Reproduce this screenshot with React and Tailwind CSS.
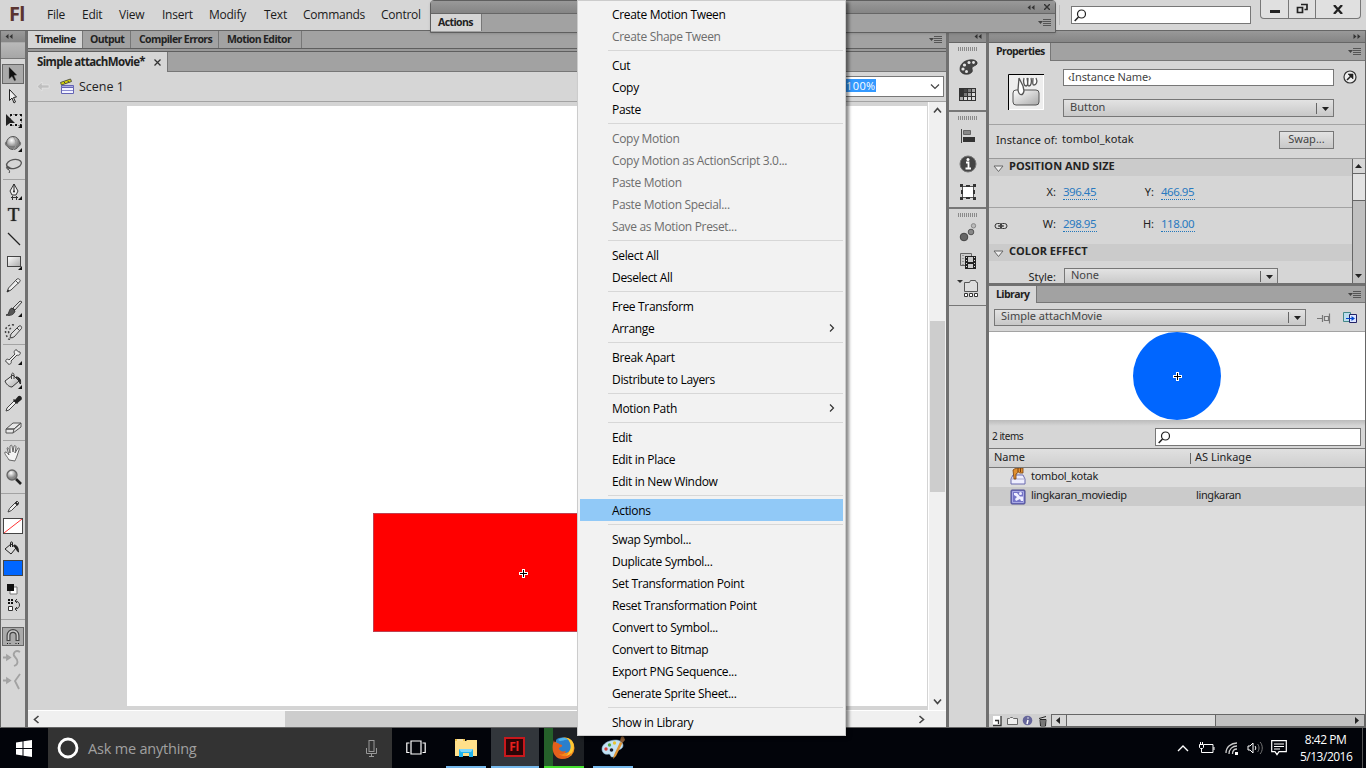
import clsx from 'clsx';

const menus = [
  { label: 'File', width: 'w-[35px]' },
  { label: 'Edit', width: 'w-[37px]' },
  { label: 'View', width: 'w-[43px]' },
  { label: 'Insert', width: 'w-[47px]' },
  { label: 'Modify', width: 'w-[55px]' },
  { label: 'Text', width: 'w-[39px]' },
  { label: 'Commands', width: 'w-[78px]' },
  { label: 'Control', width: 'w-[50px]' },
];

const contextGroups = [
  [{ label: 'Create Motion Tween' }, { label: 'Create Shape Tween', disabled: true }],
  [{ label: 'Cut' }, { label: 'Copy' }, { label: 'Paste' }],
  [
    { label: 'Copy Motion', disabled: true },
    { label: 'Copy Motion as ActionScript 3.0...', disabled: true },
    { label: 'Paste Motion', disabled: true },
    { label: 'Paste Motion Special...', disabled: true },
    { label: 'Save as Motion Preset...', disabled: true },
  ],
  [{ label: 'Select All' }, { label: 'Deselect All' }],
  [{ label: 'Free Transform' }, { label: 'Arrange', submenu: true }],
  [{ label: 'Break Apart' }, { label: 'Distribute to Layers' }],
  [{ label: 'Motion Path', submenu: true }],
  [{ label: 'Edit' }, { label: 'Edit in Place' }, { label: 'Edit in New Window' }],
  [{ label: 'Actions', active: true }],
  [
    { label: 'Swap Symbol...' },
    { label: 'Duplicate Symbol...' },
    { label: 'Set Transformation Point' },
    { label: 'Reset Transformation Point' },
    { label: 'Convert to Symbol...' },
    { label: 'Convert to Bitmap' },
    { label: 'Export PNG Sequence...' },
    { label: 'Generate Sprite Sheet...' },
  ],
  [{ label: 'Show in Library' }],
];

function Svg({ w = 22, h = 22, className, children }) {
  return (
    <svg
      className={clsx('block shrink-0', className)}
      fill="none"
      height={h}
      viewBox={`0 0 ${w} ${h}`}
      width={w}
    >
      {children}
    </svg>
  );
}

const Corner = () => <path d="M21 15v4h-4z" fill="#111" />;

const tools = {
  select: (
    <Svg>
      <path d="M8 4v12l3-2.500 2.500 4.500 1.500-1-2-4.500 3-.5z" fill="#111" stroke="#777" strokeWidth=".5" />
    </Svg>
  ),
  subselect: (
    <Svg>
      <path d="M8.500 4.500v11l2.500-2.500 2 5 1.500-1-2-4.500 3-.5z" fill="#eee" stroke="#222" />
    </Svg>
  ),
  transform: (
    <Svg>
      <path d="M9.500 5.500h11v11h-11z" stroke="#333" strokeDasharray="1 2" />
      <path d="M9 5h2v2H9zM14 5h2v2h-2zM19 5h2v2h-2zM19 10h2v2h-2zM14 15h2v2h-2zM9 15h2v2H9zM19 15h1v2h-1z" fill="#111" />
      <path d="M5 5v12l4-3h5z" fill="#222" />
      <Corner />
    </Svg>
  ),
  rotate3d: (
    <Svg>
      <circle cx="12" cy="10" fill="url(#ball)" r="6.500" stroke="#555" />
      <path d="M5 9c-2 3 2 5 7 5 5 0 9-2 7-5" stroke="#777" strokeWidth="1.300" />
      <path d="M12 4c4 3 4 10 0 13" stroke="#999" />
      <Corner />
    </Svg>
  ),
  lasso: (
    <Svg>
      <ellipse cx="13" cy="8" rx="7.500" ry="4.500" stroke="#555" strokeWidth="1.300" transform="rotate(-12 13 8)" />
      <path d="M7 10c-3 1-1 4 1 3s0-3-1-2c-1 3 3 3 1 6" stroke="#444" />
    </Svg>
  ),
  pen: (
    <Svg>
      <path d="M13 3l4 7-2 4h-4l-2-4z" fill="#eee" stroke="#333" />
      <path d="M13 3v7" stroke="#222" />
      <circle cx="13" cy="10.500" fill="#222" r="1" />
      <path d="M11.500 15v4M15.500 15v4M10 16.500h7" stroke="#333" />
      <Corner />
    </Svg>
  ),
  line: (
    <Svg>
      <path d="M7 5l12 12" stroke="#222" strokeWidth="1.200" />
    </Svg>
  ),
  rect: (
    <Svg>
      <rect fill="url(#sheen)" height="10" stroke="#444" width="13" x="6.500" y="5.500" />
      <Corner />
    </Svg>
  ),
  pencil: (
    <Svg>
      <path d="M6 18l1.500-4 8.500-9c1.500-1 4 1 3 2.500l-9 8.500z" fill="#eee" stroke="#444" />
      <path d="M6 18l1-2.500 1.500 1.500z" fill="#222" />
      <path d="M14.500 6.500l3 3" stroke="#555" />
    </Svg>
  ),
  brush: (
    <Svg>
      <path d="M12 10l7-7 2 1-7 8z" fill="#ddd" stroke="#444" />
      <path d="M5 17c4 0 2-6 6-7l3 3c-1 4-5 5-9 4z" fill="#555" stroke="#333" />
      <Corner />
    </Svg>
  ),
  deco: (
    <Svg>
      <path d="M9 17l1-4 8-8c2-1 3 1 2.500 2.500L13 16z" fill="#ddd" stroke="#444" />
      <path d="M16 7l2.500 2.500" stroke="#444" />
      <path d="M13 4C7 3 3 7 5 13s3 6 6 4M10 7c-3 2-3 5-1 7" stroke="#444" strokeDasharray="2 2" strokeWidth="1.500" />
    </Svg>
  ),
  bone: (
    <Svg>
      <path d="M5 16c-1-2 1-4 3-2l6-6c-2-2 0-5 2-4 0 1 1 2 3 2 1 2-1 4-3 3l-6 6c1 2-1 4-3 3 0-1-1-2-2-2z" fill="#eee" stroke="#444" />
      <Corner />
    </Svg>
  ),
  bucket: (
    <Svg>
      <path d="M4 11l8-6 6 6-7 6c-3 0-6-3-7-6z" fill="url(#sheen)" stroke="#333" />
      <path d="M10.500 9V5c0-2.500 2.500-2.500 2.500 0v4" stroke="#444" />
      <path d="M15 7c4 0 5 3 4.500 7-1.500-1-1-5-4.500-7z" fill="#222" stroke="#222" />
      <Corner />
    </Svg>
  ),
  dropper: (
    <Svg>
      <path d="M5 18l1-3 7-7 2 2-7 7z" fill="#eee" stroke="#444" />
      <path d="M12.500 6.500l4 4M14.500 7.500l3-3.500c1.500-1 3 .5 2.500 2l-3.500 3z" fill="#222" stroke="#222" strokeWidth="1.600" />
    </Svg>
  ),
  eraser: (
    <Svg>
      <path d="M5 12l7-6h8l-7 6zM5 12v4h7l8-6V6l-7 6z" fill="#e8e8e8" stroke="#555" />
      <path d="M13 12l-1 4" stroke="#555" />
    </Svg>
  ),
  hand: (
    <Svg>
      <path
        d="M8 18c-2-4-5-6-4-8 2 0 2 1 4 3L6 6c1-1 2 0 3 5V4c1-1 2-1 2 0l1 6 1-6c1-1 2 0 2 1l-1 6 3-5c1 0 2 0 1 2l-2 6c-1 3-2 4-2 5z"
        fill="#f4f4f4"
        stroke="#666"
      />
    </Svg>
  ),
  zoom: (
    <Svg>
      <circle cx="11" cy="8" fill="url(#ball)" r="5" stroke="#666" strokeWidth="1.300" />
      <path d="M15 12l5 5" stroke="#222" strokeWidth="2.600" />
    </Svg>
  ),
};

function ToolGroup({ names, className }) {
  return (
    <div className={clsx('flex flex-col items-center justify-around', className)}>
      {names.map((name) => (
        <div
          key={name}
          className={clsx(
            'flex w-[22px] items-center justify-center pr-[2px]',
            name === 'select' ? 'h-[20px] border border-[#666] bg-[#aaa]' : 'h-[22px]',
          )}
        >
          {name === 'text' ? (
            <span className="pl-[3px] font-['Liberation_Serif',serif] text-[19px] leading-[20px] text-[#222] [text-shadow:0_0_1px_#222]">
              T
            </span>
          ) : (
            tools[name]
          )}
        </div>
      ))}
    </div>
  );
}

const Rule = () => <div className="ml-0.5 h-px w-[22px] shrink-0 bg-[#a3a3a3]" />;

function Toolbar() {
  return (
    <div className="flex h-full w-[28px] shrink-0 flex-col border-l border-[#666] border-r-[3px] border-r-[#707070] bg-[#d6d6d6]">
      <div className="flex h-[11px] items-center bg-gradient-to-b from-[#9a9a9a] to-[#868686] pl-1">
        <Chevrons />
      </div>
      <div className="h-[17px] border-y border-[#777] border-t-[#aaa] bg-gradient-to-b from-[#b9b9b9] to-[#a6a6a6]" />
      <ToolGroup className="mt-[4px] h-[116px]" names={['select', 'subselect', 'transform', 'rotate3d', 'lasso']} />
      <Rule />
      <ToolGroup className="h-[164px]" names={['pen', 'text', 'line', 'rect', 'pencil', 'brush', 'deco']} />
      <Rule />
      <ToolGroup className="h-[95px]" names={['bone', 'bucket', 'dropper', 'eraser']} />
      <Rule />
      <ToolGroup className="h-[52px] pb-[3px]" names={['hand', 'zoom']} />
      <div className="h-px shrink-0 bg-[#a3a3a3]" />
      <div className="flex flex-col items-center">
        <Svg className="mt-[3px]" h={19}>
          <path d="M6 15l1.500-3.500L15 4l2 2-7.500 7.500z" fill="#eee" stroke="#444" />
          <path d="M13.500 5.500l2.500 2.500" stroke="#222" strokeWidth="2" />
        </Svg>
        <Svg className="mr-px mt-0.5" h={16} w={20}>
          <rect fill="#fff" height="15" stroke="#444" width="19" x=".5" y=".5" />
          <path d="M1 15L19 1" stroke="#f33" />
        </Svg>
        <Svg className="mr-[2px] mt-[5px]" h={18}>
          <path d="M4 10l6-5 5 4-5 6z" fill="#ddd" stroke="#222" />
          <path d="M9.500 8V4c0-1.500 2-1.500 2 0v4" stroke="#222" />
          <path d="M13 6c3 0 4.500 3 4.500 7-2-1-2-4-4.500-6z" fill="#222" stroke="#222" />
        </Svg>
        <div className="mr-px mt-[3px] h-[16px] w-[20px] border border-[#444] bg-[#06f]" />
        <Svg className="mr-[2px] mt-[5px]" h={16}>
          <path d="M9 6h7v7H9z" fill="#fff" stroke="#777" />
          <path d="M6 3h7v7H6z" fill="#111" />
        </Svg>
        <Svg className="mr-px" h={16}>
          <path d="M6 2h2v2H6zM9 2h2v2H9zM6 5h2v2H6zM9 5h2v2H9z" fill="#111" />
          <path d="M6.500 9.500h4v4h-4z" fill="#fff" stroke="#333" />
          <path d="M13 4c6 0 6 8 0 8M15 2l-2 2 2 2M15 10l-2 2 2 2" stroke="#333" />
        </Svg>
      </div>
      <div className="mt-[6px] h-px shrink-0 bg-[#a3a3a3]" />
      <div className="ml-px mt-[7px] flex h-[19px] w-[22px] shrink-0 items-center justify-center border border-[#666] bg-[#aaa]">
        <Svg h={17} w={20}>
          <path d="M5.500 13V7.500c0-6 9-6 9 0V13" stroke="#444" strokeWidth="4" />
          <path d="M5.500 12V7.500c0-6 9-6 9 0V12" stroke="#ccc" strokeWidth="1.600" />
          <path d="M4 15.500h1M6.500 15.500h1M12.500 15.500h1M15 15.500h1" stroke="#111" />
        </Svg>
      </div>
      <Svg className="ml-0.5 mt-0.5" h={22}>
        <path d="M0 9.500h5M4 7.500l3 2-3 2zM17 4c-5-3-8 2-5 5s4 7-1 9" fill="none" stroke="#a2a2a2" strokeWidth="1.800" />
      </Svg>
      <Svg className="ml-0.5 mt-px" h={22}>
        <path d="M0 9.500h5M4 7.500l3 2-3 2zM17 3l-5 7 4 8" fill="none" stroke="#a2a2a2" strokeWidth="1.800" />
      </Svg>
    </div>
  );
}

function Chevrons({ flip }) {
  return (
    <Svg className={clsx(flip && 'rotate-180')} h={5} w={8}>
      <path d="M3.500 0v5L.5 2.500zM7.500 0v5l-3-2.500z" fill="#333" />
    </Svg>
  );
}

function PanelMenu({ className }) {
  return (
    <Svg className={className} h={8} w={13}>
      <path d="M0 2h5L2.500 5z" fill="#444" />
      <path d="M5 .5h8M5 2.500h8M5 4.500h8M5 6.500h8" stroke="#555" />
    </Svg>
  );
}

function Arrow({ dir = 'down', className }) {
  const paths = {
    down: 'M0 1h7L3.500 5z',
    up: 'M0 5h7L3.500 1z',
    left: 'M5 0v7L1 3.500z',
    right: 'M1 0v7l4-3.500z',
  };
  return (
    <Svg className={className} h={7} w={7}>
      <path d={paths[dir]} fill="#222" />
    </Svg>
  );
}

function Search({ className }) {
  return (
    <div className={clsx('flex items-center border border-[#777] bg-white pl-[2px]', className)}>
      <Svg h={13} w={12}>
        <circle cx="7.500" cy="5" r="4" stroke="#222" strokeWidth="1.200" />
        <path d="M4.500 8L.7 12" stroke="#222" strokeWidth="1.500" />
      </Svg>
    </div>
  );
}

function Dropdown({ label, className }) {
  return (
    <div
      className={clsx(
        'flex items-center border border-[#777] bg-gradient-to-b from-[#e3e3e3] to-[#c8c8c8] pl-1.5 text-[#444]',
        className,
      )}
    >
      <span className="flex-1 pb-[2px] tracking-normal">{label}</span>
      <span className="h-[11px] w-px bg-[#666]" />
      <Arrow className="ml-[5px] mr-1 mt-0.5" />
    </div>
  );
}

function Tab({ className, children }) {
  return (
    <div
      className={clsx(
        "flex shrink-0 items-center whitespace-nowrap border-r border-[#777] font-['Open_Sans',sans-serif] text-[10.500px] font-bold tracking-[-0.6px] text-[#222]",
        className,
      )}
    >
      {children}
    </div>
  );
}

function MenuBar() {
  return (
    <header className="flex h-[30px] shrink-0 bg-[#d6d6d6]">
      <div className="w-[47px] pl-[9px] font-['Open_Sans',sans-serif] text-[20px] font-bold leading-[27px] tracking-[-0.8px] text-[#5a3430]">
        Fl
      </div>
      <nav className="flex text-[12px] leading-[30px] tracking-[-0.25px] text-[#1a1a1a]">
        {menus.map((menu) => (
          <span key={menu.label} className={clsx('shrink-0', menu.width)}>
            {menu.label}
          </span>
        ))}
      </nav>
      <div className="ml-auto mt-[5px] h-[20px] w-px bg-[#bbb]" />
      <Search className="ml-[11px] mt-[6px] h-[18px] w-[180px]" />
      <div className="ml-[9px] mr-[5px] flex h-[19px] w-[101px] rounded-b-sm border border-t-0 border-[#777] bg-[#e0e0e0]">
        <div className="flex w-[28px] items-end justify-center border-r border-[#777] pb-[5px]">
          <span className="h-[3px] w-[10px] bg-[#222]" />
        </div>
        <div className="flex w-[27px] items-center justify-center border-r border-[#777]">
          <Svg h={12} w={12}>
            <path d="M5 1.500h6v5H8.500M1.500 4.500h5v5h-5z" stroke="#222" strokeWidth="1.700" />
          </Svg>
        </div>
        <div className="flex flex-1 items-center justify-center">
          <Svg h={9} w={10}>
            <path d="M1 0l8 9M9 0L1 9" stroke="#222" strokeWidth="2.300" />
          </Svg>
        </div>
      </div>
    </header>
  );
}

function Cross() {
  return (
    <Svg h={9} w={9}>
      <path d="M3 0h3v3h3v3H6v3H3V6H0V3h3z" fill="#fff" />
      <path d="M4.500 1v7M1 4.500h7" stroke="#000" />
    </Svg>
  );
}

function ScrollMark({ d }) {
  return (
    <Svg h={9} w={9}>
      <path d={d} stroke="#444" strokeWidth="1.600" />
    </Svg>
  );
}

function Document() {
  return (
    <main className="flex w-[918px] shrink-0 flex-col">
      <div className="flex h-[17px] bg-[#a2a2a2]">
        <Tab className="w-[55px] bg-[#d6d6d6] pl-[7px] pt-px">Timeline</Tab>
        <Tab className="w-[48px] pl-[7px] pt-px">Output</Tab>
        <Tab className="w-[88px] pl-[8px] pt-px">Compiler Errors</Tab>
        <Tab className="w-[83px] pl-[8px] pt-px">Motion Editor</Tab>
        <PanelMenu className="ml-auto mr-[4px] mt-[5px]" />
      </div>
      <div className="h-[4px] border-y border-[#5f5f5f] bg-[#999]" />
      <div className="flex h-[20px] border-b border-[#777] bg-[#a2a2a2]">
        <div className="-mb-px flex w-[140px] items-center whitespace-nowrap border-r border-[#777] bg-[#d6d6d6] pl-[9px] font-['Open_Sans',sans-serif] text-[11.500px] font-bold tracking-[-0.64px] text-[#222]">
          <span className="w-[117px]">Simple attachMovie*</span>
          <Svg h={7} w={7}>
            <path d="M.5 .5l6 6M6.500.5l-6 6" stroke="#333" strokeWidth="1.300" />
          </Svg>
        </div>
      </div>
      <div className="flex h-[30px] items-center border-b border-[#a3a3a3] bg-[#d6d6d6] pl-2 text-[12.500px]">
        <Svg h={11} w={14}>
          <path d="M6 1L1 5.500 6 10V7h7V4H6z" fill="#bfbfbf" stroke="#eee" strokeWidth=".5" />
        </Svg>
        <Svg className="ml-[9px] mr-1" h={17} w={16}>
          <path d="M2.500 9.500h12v6h-12z" fill="#f2f2ff" stroke="#6464b4" />
          <path d="M2.500 7.500h12v2h-12z" fill="#aaaae0" stroke="#6464b4" />
          <path d="M3 12.500h11" stroke="#8c8cd0" />
          <path d="M1.500 4.500l10-3.500 1 2.500-10 3.500z" fill="#d8d800" stroke="#554" />
          <path d="M5 4l1.500 1.500M8.500 2.800l1.500 1.500" stroke="#443" />
        </Svg>
        <span className="pt-[2px] text-[#222]">Scene 1</span>
        <div className="ml-auto mr-[2px] flex h-[21px] w-[108px] items-center border border-[#777] bg-white pl-[9px]">
          <span className="mb-[2px] bg-[#39f] text-[11px] leading-[13px] tracking-[0.4px] text-white">100%</span>
          <Svg className="ml-auto mr-[3px]" h={6} w={10}>
            <path d="M1 .5l4 4 4-4" stroke="#444" strokeWidth="1.200" />
          </Svg>
        </div>
      </div>
      <div className="flex h-[608px]">
        <div className="flex-1 overflow-hidden bg-[#d4d4d4] pl-[99px] pt-[4px]">
          <div className="mr-px h-[600px] bg-white pl-[246px] pt-[407px]">
            <div className="flex h-[119px] w-[299px] items-center justify-center border border-[#c04050] bg-[#f00] pl-[2px] pt-[2px]">
              <Cross />
            </div>
          </div>
        </div>
        <div className="flex w-[18px] flex-col items-center border-l border-white bg-[#f0f0f0]">
          <div className="flex h-[17px] items-center">
            <ScrollMark d="M1 6.500l3.500-4 3.500 4" />
          </div>
          <div className="mt-[202px] h-[171px] w-[15px] bg-[#cdcdcd]" />
          <div className="mb-0 mt-auto flex h-[17px] items-center">
            <ScrollMark d="M1 2.500l3.500 4 3.500-4" />
          </div>
        </div>
      </div>
      <div className="flex h-[17px] items-center border-t border-white bg-[#f0f0f0] pl-[4px] pr-[20px]">
        <ScrollMark d="M6.500 1l-4 3.500 4 3.500" />
        <div className="ml-[244px] h-full w-[400px] bg-[#cdcdcd]" />
        <div className="ml-auto">
          <ScrollMark d="M2.500 1l4 3.500-4 3.500" />
        </div>
      </div>
    </main>
  );
}

const Grip = () => (
  <div className="mx-auto h-[4px] w-[19px] bg-[repeating-linear-gradient(90deg,#8a8a8a_0_1px,transparent_1px_2px)]" />
);

function Dock() {
  return (
    <aside className="flex w-[43px] shrink-0 flex-col border-x-[3px] border-[#707070] bg-[#d6d6d6]">
      <div className="flex h-[12px] items-center justify-end border-b border-[#666] bg-[#8c8c8c] pr-1">
        <Chevrons />
      </div>
      <div className="flex h-[69px] flex-col items-center border-b-2 border-[#777] pt-[4px]">
        <Grip />
        <Svg className="mt-[7px]" h={18} w={20}>
          <path d="M11 2c5-1 9 1 8 4-1 2-5 2-5 4s2 4-3 6c-5 1-9-1-9-5s3-8 9-9z" fill="#444" stroke="#222" strokeWidth=".6" />
          <circle cx="6.500" cy="7" fill="#e4e4e4" r="1.600" />
          <circle cx="11" cy="4.500" fill="#e4e4e4" r="1.500" />
          <circle cx="15.500" cy="4.500" fill="#e4e4e4" r="1.400" />
          <circle cx="5" cy="11" fill="#e4e4e4" r="1.600" />
          <circle cx="8.500" cy="13.500" fill="#e4e4e4" r="1.500" />
        </Svg>
        <Svg className="mt-[11px]" h={16} w={19}>
          <path d="M1 1h17v13H1z" fill="#333" />
          <path d="M2 2h3v3H2z" fill="#333" />
          <path d="M6 2h3v3H6z" fill="#444" />
          <path d="M10 2h3v3h-3zM6 6h3v3H6z" fill="#777" />
          <path d="M14 2h3v3h-3zM10 6h3v3h-3zM2 10h3v3H2z" fill="#aaa" />
          <path d="M14 6h3v3h-3zM6 10h3v3H6zM10 10h3v3h-3zM14 10h3v3h-3z" fill="#ddd" />
        </Svg>
      </div>
      <div className="flex h-[97px] flex-col items-center border-b-2 border-[#777] pt-[4px]">
        <Grip />
        <Svg className="mt-[9px]" h={15} w={18}>
          <path d="M2.500 0v14" stroke="#444" />
          <path d="M4.500 1.500h7v4h-7z" fill="#888" stroke="#666" />
          <path d="M4 8h12v5H4z" fill="#333" />
        </Svg>
        <Svg className="mt-[11px]" h={18} w={18}>
          <circle cx="9" cy="9" fill="#444" r="8" stroke="#777" />
          <circle cx="9" cy="4.500" fill="#fff" r="1.500" />
          <path d="M7 7.500h2.500V13M6.500 13.500h5.500" stroke="#fff" strokeWidth="1.800" />
        </Svg>
        <Svg className="mt-[10px]" h={18} w={18}>
          <path d="M3.500 3.500h11v11h-11z" fill="#fff" stroke="#555" />
          <path d="M1 1h3v3H1zM7 2h4v2H7zM14 1h3v3h-3zM2 7h2v4H2zM14 7h2v4h-2zM1 14h3v3H1zM7 14h4v2H7zM14 14h3v3h-3z" fill="#333" />
        </Svg>
      </div>
      <div className="flex h-[97px] flex-col items-center border-b border-[#777] pt-[4px]">
        <Grip />
        <Svg className="mt-[6px]" h={19} w={18}>
          <circle cx="5" cy="14" fill="#666" r="3.800" stroke="#444" />
          <circle cx="12" cy="9" fill="#888" r="2.800" stroke="#555" />
          <circle cx="14.500" cy="2.800" fill="#bbb" r="2.200" stroke="#888" />
        </Svg>
        <Svg className="mt-[10px]" h={18} w={18}>
          <path d="M1.500 1.500h11v12h-11z" fill="#ccc" stroke="#666" />
          <path d="M4 3v10" stroke="#666" strokeDasharray="1 2" />
          <path d="M6 4h11v13H6z" fill="#222" />
          <path d="M9 5h5v5H9zM9 12h5v4H9z" fill="#ccc" />
          <path d="M7.500 5v12M15.500 5v12" stroke="#ddd" strokeDasharray="1 2" />
        </Svg>
        <Svg className="mt-[9px]" h={19} w={22}>
          <path d="M0 1h6L3 4z" fill="#333" />
          <path d="M7.500 3.500h5l1-2h5l1 2h1v9h-13z" fill="#ddd" stroke="#555" />
          <path d="M7.500 14.500h3v3h-3zM12.500 14.500h3v3h-3zM17.500 14.500h3v3h-3z" fill="#fff" stroke="#333" />
        </Svg>
      </div>
    </aside>
  );
}

function Section({ children }) {
  return (
    <div className="flex h-[17px] items-center bg-[#cbcbcb] pb-[2px] pl-1 font-['Open_Sans',sans-serif] text-[11px] font-bold text-[#222]">
      <Svg className="mr-[5px] mt-[4px]" h={8} w={11}>
        <path d="M1 1h9L5.500 6.500z" fill="#eee" stroke="#666" />
      </Svg>
      {children}
    </div>
  );
}

function Value({ label, value, labelClass }) {
  return (
    <>
      <span className={clsx('text-right text-[#222]', labelClass)}>{label}</span>
      <span className="ml-[7px] w-[34px] whitespace-nowrap border-b border-dotted border-[#2277bb] text-[11.500px] leading-[14px] tracking-[-0.5px] text-[#2a7ac0]">
        {value}
      </span>
    </>
  );
}

function Properties() {
  return (
    <section>
      <div className="flex h-[18px] border-b border-[#777] bg-[#a2a2a2]">
        <Tab className="-mb-px w-[62px] bg-[#d6d6d6] pb-px pl-[7px]">Properties</Tab>
        <PanelMenu className="ml-auto mr-[4px] mt-[5px]" />
      </div>
      <div className="flex h-[64px] border-b border-[#a3a3a3]">
        <Svg className="ml-[19px] mt-[13px]" h={36} w={36}>
          <path d="M0 0h36v36H0z" fill="#eee" />
          <path d="M35.500 0v35.500H0" stroke="#fff" />
          <path d="M.5 36V.5H36" stroke="#000" />
          <rect fill="url(#sheen)" height="15" rx="3" stroke="#555" width="26" x="5" y="16" />
          <path
            d="M11 4l-1 12c1 6 5 6 6 1l-1-5M11 4l4 8M16 4c-1 4 0 8 2 8s2-4 1-8M20 4c0 3-1 8 1 8s3-4 2-8M25 4c0 3-1 7 1 7s4-3 2-7"
            fill="#fff"
            stroke="#555"
            strokeWidth="1.300"
          />
        </Svg>
        <div className="ml-[19px] mt-[8px] w-[271px]">
          <div className="flex h-[17px] items-center border border-[#777] bg-white pl-[4px] tracking-[-0.1px] text-[#444]">
            &lsaquo;Instance Name&rsaquo;
          </div>
          <Dropdown className="mt-[13px] h-[18px]" label="Button" />
        </div>
        <Svg className="ml-[9px] mt-[9px]" h={14} w={14}>
          <circle cx="7" cy="7" fill="#eee" r="6" stroke="#333" strokeWidth="1.200" />
          <path d="M4 10l4-4" stroke="#222" strokeWidth="1.600" />
          <path d="M5 4h5v5z" fill="#222" stroke="#222" strokeWidth=".6" />
        </Svg>
      </div>
      <div className="flex h-[34px] items-center border-b border-[#999] pb-[3px] pl-[7px] text-[#222]">
        <span className="w-[66px] tracking-[0.1px]">Instance of:</span>
        <span className="pb-px tracking-[0.1px]">tombol_kotak</span>
        <div className="ml-auto mr-[31px] h-[18px] w-[55px] border border-[#777] bg-gradient-to-b from-[#e3e3e3] to-[#c8c8c8] text-center leading-[14px] text-[#444]">
          Swap...
        </div>
      </div>
      <div className="flex h-[124px]">
        <div className="w-[363px] overflow-hidden">
          <Section>POSITION AND SIZE</Section>
          <div className="flex h-[32px] items-center border-b border-[#a3a3a3] pt-px">
            <Value label="X:" labelClass="w-[67px]" value="396.45" />
            <Value label="Y:" labelClass="w-[57px]" value="466.95" />
          </div>
          <div className="flex h-[36px] items-center pb-[3px]">
            <Svg className="ml-[5px] mt-[2px]" h={8} w={14}>
              <rect height="5" rx="2.500" stroke="#333" width="7" x="1" y="1.500" />
              <rect height="5" rx="2.500" stroke="#333" width="7" x="6" y="1.500" />
              <path d="M4 4h6" stroke="#222" />
            </Svg>
            <Value label="W:" labelClass="w-[48px]" value="298.95" />
            <Value label="H:" labelClass="w-[57px]" value="118.00" />
          </div>
          <Section>COLOR EFFECT</Section>
          <div className="flex pt-[7px]">
            <span className="w-[67px] pt-[1px] text-right text-[#222]">Style:</span>
            <Dropdown className="ml-[8px] h-[17px] w-[214px]" label="None" />
          </div>
        </div>
        <div className="flex w-[13px] flex-col border-l border-[#666] bg-[#c0c0c0]">
          <div className="flex h-[15px] items-center justify-center border-b border-[#666] bg-[#d6d6d6] pr-px">
            <Arrow dir="up" />
          </div>
          <div className="h-[27px] border-b border-[#666] bg-[#e2e2e2]" />
          <div className="mt-auto flex h-[14px] items-center justify-center pr-px">
            <Arrow />
          </div>
        </div>
      </div>
    </section>
  );
}

function Library() {
  return (
    <section className="flex flex-1 flex-col">
      <div className="flex h-[17px] border-b border-[#777] bg-[#a2a2a2]">
        <Tab className="-mb-px w-[48px] bg-[#d6d6d6] pl-[7px]">Library</Tab>
        <PanelMenu className="ml-auto mr-[4px] mt-[5px]" />
      </div>
      <div className="flex h-[29px] items-center border-b border-[#a3a3a3] pl-[5px]">
        <Dropdown className="h-[17px] w-[312px]" label="Simple attachMovie" />
        <Svg className="ml-[11px] mt-[2px]" h={12} w={15}>
          <path d="M0 6.500h5M5.500 3v7M7.500 4.500h4v4h-4zM12.500 1.500v10" fill="#ddd" stroke="#777" strokeWidth="1.200" />
        </Svg>
        <Svg className="ml-[11px] mt-[2px]" h={12} w={15}>
          <path d="M.5.5h7v9h-7z" fill="#bde" stroke="#488" />
          <path d="M6.500 2.500h7v8h-7z" fill="#dde6ff" stroke="#226" />
          <path d="M3 6.500h7" stroke="#04c" />
          <path d="M8.500 4l3.500 2.500L8.500 9z" fill="#04c" />
        </Svg>
      </div>
      <div className="flex h-[88px] items-center justify-center bg-white">
        <div className="flex h-[88px] w-[88px] items-center justify-center rounded-full bg-[#06f] pl-px pt-px">
          <Cross />
        </div>
      </div>
      <div className="h-[6px] bg-gradient-to-b from-[#bbb] to-[#d6d6d6]" />
      <div className="flex h-[22px] items-center pl-[3px]">
        <span className="pb-px text-[10px] tracking-[-0.45px] text-[#222]">2 items</span>
        <Search className="ml-auto mr-[4px] h-[18px] w-[206px]" />
      </div>
      <div className="flex h-[20px] items-center border-y border-[#777] bg-gradient-to-b from-[#e0e0e0] to-[#cfcfcf] pl-[5px] text-[#222]">
        <span className="w-[196px] pb-[2px]">Name</span>
        <span className="mr-[4px] h-[11px] w-px bg-[#666]" />
        <span className="pb-[2px]">AS Linkage</span>
      </div>
      <div className="flex-1 overflow-hidden bg-[#ddd] text-[#222]">
        <div className="flex h-[19px] items-center pl-[21px]">
          <Svg className="mr-[5px]" h={19} w={16}>
            <path d="M1 11l2-4h10l2 4v5H1z" fill="#eef" stroke="#6a6ab0" />
            <path d="M1.500 11h13" stroke="#aac" />
            <path d="M3 2c2-2 5-2 10-2v5H9.500l-1-1L6 6v5H4z" fill="#e09030" stroke="#7a4010" strokeWidth=".8" />
            <path d="M8 0v4M10.500 0v4" stroke="#7a4010" />
          </Svg>
          <span className="pb-[2px] tracking-[-0.3px]">tombol_kotak</span>
        </div>
        <div className="flex h-[19px] items-center bg-[#cbcbcb] pl-[21px]">
          <Svg className="mr-[5px]" h={16} w={16}>
            <rect fill="#7474c8" height="14" rx="1" stroke="#4a4a90" width="14" x="1" y="1" />
            <path d="M2.500 2.500h11v11h-11z" stroke="#aaaae4" />
            <path d="M4 4h3l3 3.500h3V12h-2l-1-2-4 2-1-2 2-2-3-2z" fill="#eef" />
            <circle cx="10.500" cy="4.500" fill="#eef" r="1.500" />
          </Svg>
          <span className="w-[165px] pb-[2px] tracking-[-0.3px]">lingkaran_moviedip</span>
          <span className="pb-[2px] tracking-[-0.4px]">lingkaran</span>
        </div>
      </div>
      <div className="flex h-[13px] bg-[#d0d0d0]">
        <div className="flex w-[62px] items-center gap-[4px] pl-[2px]">
          <Svg h={12} w={11}>
            <path d="M2 1h8v10H2z" fill="#fff" />
            <path d="M10 1v9.500H2M4 5.500h3.500V9" stroke="#333" strokeWidth="1.300" />
          </Svg>
          <Svg h={11} w={12}>
            <path d="M1.500 9.500V3.500h2l1-1h2l1 1h4v6z" fill="#eee" stroke="#666" />
          </Svg>
          <Svg h={11} w={11}>
            <circle cx="5.500" cy="5.500" fill="#66669a" r="4.800" />
            <path d="M6 2.500v1M6 5L5 9" stroke="#fff" strokeWidth="1.500" />
          </Svg>
          <Svg className="ml-px" h={12} w={10}>
            <path d="M2 4.500h6l-.5 6.500h-5z" fill="#ccc" />
            <path d="M2 4.500h6l-.5 6.500h-5zM1 3.500l7-2M4 5v5M6 5v5" stroke="#222" />
          </Svg>
        </div>
        <div className="flex flex-1 items-center border border-[#666] bg-[#c0c0c0]">
          <div className="flex h-full w-[15px] items-center justify-center border-r border-[#666] bg-[#d6d6d6] pr-px">
            <Arrow dir="left" />
          </div>
          <div className="h-full w-[149px] border-r border-[#666] bg-[#dcdcdc]" />
          <Arrow className="ml-auto mr-[3px]" dir="right" />
        </div>
      </div>
    </section>
  );
}

function ActionsPanel() {
  return (
    <div className="absolute left-[430px] top-0 h-[33px] w-[626px] rounded-t-sm border border-[#5f5f5f] bg-[#a2a2a2] shadow">
      <div className="flex h-[13px] items-center justify-end gap-[9px] border-b border-[#666] bg-gradient-to-b from-[#999] to-[#858585] pr-[5px]">
        <Chevrons />
        <Svg h={6} w={6}>
          <path d="M0 0l6 6M6 0L0 6" stroke="#333" strokeWidth="1.400" />
        </Svg>
      </div>
      <div className="flex h-[17px]">
        <Tab className="w-[51px] bg-[#d6d6d6] pl-[7px] pt-px">Actions</Tab>
        <PanelMenu className="ml-auto mr-[4px] mt-[5px]" />
      </div>
    </div>
  );
}

function ContextMenu() {
  return (
    <div className="absolute left-[577px] top-0 h-[736px] w-[269px] border border-[#ccc] bg-[#f2f2f2] px-[2px] pt-[2px] text-[12px] tracking-[-0.33px] text-black shadow-[3px_2px_3px_rgba(0,0,0,0.45)]">
      {contextGroups.map((group, index) => (
        <div key={index}>
          {index > 0 && <div className="mb-[3px] ml-[28px] mt-[3px] h-px bg-[#d7d7d7]" />}
          {group.map((item) => (
            <div
              key={item.label}
              className={clsx(
                'flex h-[22px] items-center pl-[32px] pr-[8px]',
                item.active && 'bg-[#91c9f7]',
                item.disabled && 'text-[#6d6d6d]',
              )}
            >
              <span className="flex-1 pt-px">{item.label}</span>
              {item.submenu && (
                <Svg h={8} w={6}>
                  <path d="M1 .5L4.500 4 1 7.500" stroke="#333" strokeWidth="1.200" />
                </Svg>
              )}
            </div>
          ))}
        </div>
      ))}
    </div>
  );
}

function Taskbar() {
  return (
    <footer className="flex h-[40px] shrink-0 bg-[#02040a] text-white">
      <div className="flex w-[48px] items-center justify-center">
        <Svg h={17} w={16}>
          <path d="M0 2.500L6.500 1.500V8H0zM7.500 1.300L16 0v8H7.500zM0 9h6.500v6.500L0 14.500zM7.500 9H16v8l-8.500-1.300z" fill="#fff" />
        </Svg>
      </div>
      <div className="flex w-[344px] items-center bg-[#333] pl-[9px]">
        <Svg h={22} w={22}>
          <circle cx="11" cy="11" r="9" stroke="#fff" strokeWidth="2.800" />
        </Svg>
        <span className="ml-[9px] flex-1 pt-[2px] text-[14.500px] tracking-[-0.2px] text-[#a0a0a0]">Ask me anything</span>
        <Svg className="mr-[14px]" h={17} w={13}>
          <rect height="11" stroke="#999" width="5" x="4" y=".5" />
          <path d="M1.500 8v5.500h10V8M6.500 13.500v3M4 16.500h5" stroke="#999" />
        </Svg>
      </div>
      <div className="flex w-[54px] items-center pl-[14px]">
        <Svg h={16} w={20}>
          <path d="M5 1h10v13H5zM3.500 3H.8v9.500h2.700M16.500 3h2.700v9.500h-2.700" stroke="#fff" strokeWidth="1.200" />
        </Svg>
      </div>
      <div className="flex w-[40px] items-center justify-center border-b-2 border-[#76b9ed] pt-[2px]">
        <Svg h={20} w={22}>
          <path d="M0 1h10v3H0z" fill="#f0c44c" />
          <path d="M0 3h11l1-1h10v16H0z" fill="#ffe08a" />
          <path d="M2 2h6" stroke="#fff" />
          <path d="M4 11h14v8h-4v-4H8v4H4z" fill="#1fb4f0" />
          <path d="M4 11h14l-2 3H6z" fill="#7fd8fb" />
        </Svg>
      </div>
      <div className="ml-[5px] flex w-[48px] items-center justify-center border-b-2 border-[#76b9ed] bg-[#32363b] pr-[2px]">
        <div className="h-[20px] w-[21px] border-2 border-[#c8181c] bg-[#2c0507] text-center font-['Open_Sans',sans-serif] text-[12px] font-bold leading-[15px] tracking-[-0.3px] text-[#e8201f]">
          Fl
        </div>
      </div>
      <div className="ml-[5px] flex w-[40px] items-center border-b-2 border-[#45e030] bg-[linear-gradient(90deg,#25602a_9px,#1d2024_9px)] pl-[7px] pt-px">
        <Svg h={24} w={24}>
          <circle cx="13" cy="12" fill="#f28a1c" r="10.500" />
          <path d="M13 1.500c8 0 11 6 9.500 12-2 5-5 8-9 8 6-4 8-12-.5-20z" fill="#ffc832" />
          <path d="M5 4c4-4 12-3 14 3s-1 10-5 10-8-4-9-13z" fill="#2a7fcc" />
          <path d="M7 4c3-3 8-3 10 0-3-1-5 1-8 1z" fill="#4fb4ec" />
          <path d="M3 4c0 2 1 3 3 3 1 0 2 0 2 1l3 1c1 2-2 2-3 3 0 3 3 4 7 3-1 3-4 4-7 3 3 3 9 3 12-1 0 3-4 6-9 6C4 23-1 15 3 4z" fill="#e4601c" />
        </Svg>
      </div>
      <div className="ml-[9px] flex w-[40px] items-center justify-center border-b-2 border-[#76b9ed] pr-px pt-px">
        <Svg h={24} w={24}>
          <path d="M9 5c6-2 12-1 13 4 0 5-5 4-7 7-1 3-1 5-4 5-2 0-1-3-3-3-4 1-7-1-7-5s4-7 8-8z" fill="#c4e2f4" stroke="#8db8d4" strokeWidth=".6" />
          <circle cx="5" cy="13" fill="#d8403a" r="1.700" />
          <circle cx="8.500" cy="9" fill="#52ac48" r="1.700" />
          <circle cx="13.500" cy="7" fill="#e8c430" r="1.700" />
          <circle cx="10.500" cy="14" fill="#1c1c28" r="1.800" />
          <path d="M19 6l2.500 1L15 20l-3 3 1-4z" fill="#e09434" />
          <path d="M19 5l1-4c1-1 2-1 3 0l1 3-2.500 3z" fill="#8a5c34" />
        </Svg>
      </div>
      <div className="ml-auto flex items-center">
        <Svg h={7} w={12}>
          <path d="M1 6l5-5 5 5" stroke="#fff" strokeWidth="1.400" />
        </Svg>
        <Svg className="ml-[9px]" h={14} w={17}>
          <path d="M6 3.500h9v8H5M16 6v3M1.500 3.500h4v3l-1 1h-2l-1-1zM2.500 1v2M4.500 1v2M3.500 8v3.500H5" stroke="#fff" />
        </Svg>
        <Svg className="ml-[10px]" h={14} w={14}>
          <path d="M1 12C1 6 6 2 12 2M4 13c0-5 3.500-8 8-8M7.500 13c0-3 1.500-5 4.500-5" stroke="#ccc" strokeWidth="1.300" />
          <path d="M10 11h3v3h-3z" fill="#fff" />
        </Svg>
        <Svg className="ml-[8px]" h={14} w={16}>
          <path d="M1 5h2l3-3v10L3 9H1z" stroke="#fff" />
          <path d="M8 5c1 1 1 3 0 4" stroke="#fff" />
          <path d="M10.500 3c2 2 2 6 0 8M13 1c3 3 3 9 0 12" stroke="#777" />
        </Svg>
        <Svg className="ml-[8px]" h={16} w={16}>
          <path d="M.7.700h14.600v11H8l-2 3-2-3H.7zM3 4h10M3 6.500h10M3 9h6" stroke="#fff" strokeWidth="1.200" />
        </Svg>
        <div className="ml-[13px] w-[51px] whitespace-nowrap text-center text-[12px] leading-[17px] tracking-[-0.5px]">
          8:42 PM
          <br />
          5/13/2016
        </div>
        <div className="ml-[11px] mr-[3px] h-[40px] w-px bg-[#555]" />
      </div>
    </footer>
  );
}

export default function App() {
  return (
    <div className="relative flex h-[768px] w-[1366px] flex-col overflow-hidden bg-[#d6d6d6] font-['Open_Sans','Noto_Sans',sans-serif]">
      <svg className="absolute h-0 w-0">
        <defs>
          <radialGradient cx=".4" cy=".3" id="ball">
            <stop offset="0" stopColor="#fff" />
            <stop offset="1" stopColor="#888" />
          </radialGradient>
          <linearGradient id="sheen" x2="1" y2="1">
            <stop offset="0" stopColor="#fff" />
            <stop offset="1" stopColor="#aaa" />
          </linearGradient>
        </defs>
      </svg>
      <MenuBar />
      <div className="flex h-[698px] shrink-0 border-y border-[#666]">
        <Toolbar />
        <Document />
        <Dock />
        <div className="flex w-[377px] flex-col border-r border-[#666] font-['Noto_Sans',sans-serif] text-[11px]">
          <div className="flex h-[12px] items-center justify-end border-b border-[#666] bg-gradient-to-b from-[#999] to-[#858585] pr-[4px]">
            <Chevrons flip />
          </div>
          <Properties />
          <div className="h-[3px] bg-[#707070]" />
          <Library />
        </div>
      </div>
      <Taskbar />
      <ActionsPanel />
      <ContextMenu />
    </div>
  );
}
